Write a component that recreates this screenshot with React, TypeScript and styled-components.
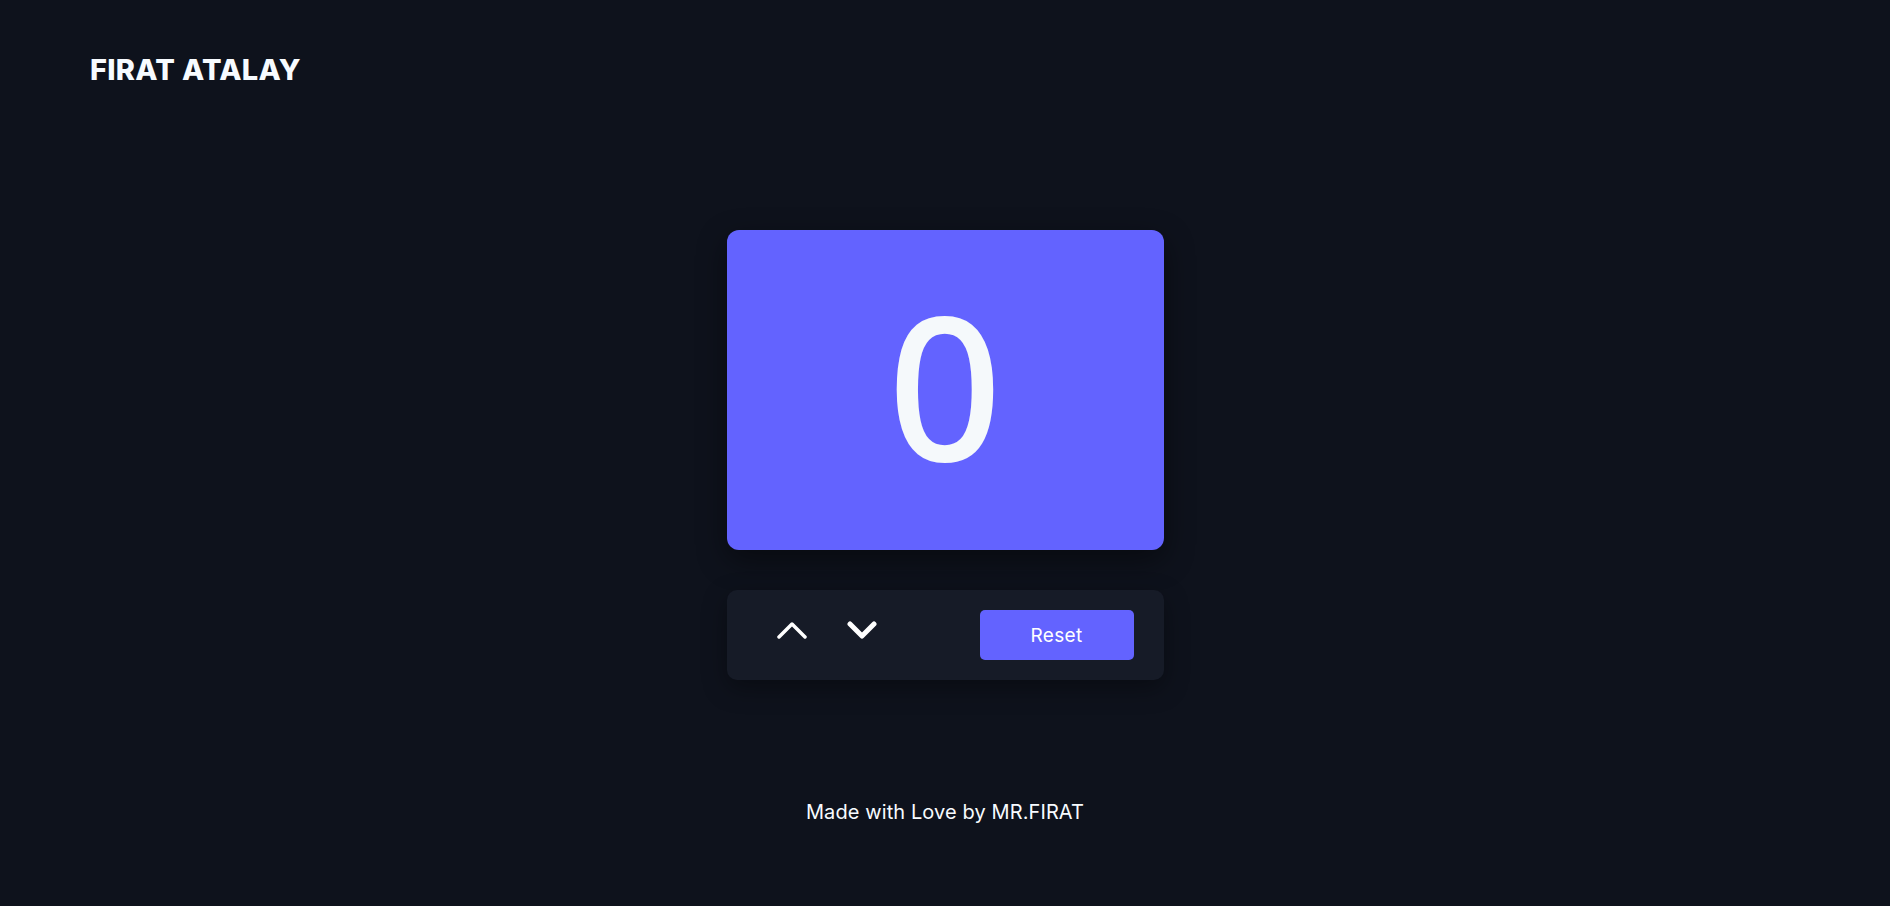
import React, { useState } from "react";
import styled, { createGlobalStyle } from "styled-components";

const Global = createGlobalStyle`
  html, body { margin: 0; padding: 0; background: #0e121c; }
  body { font-family: Inter, "Open Sans", sans-serif; color: #ffffff; }
  * { box-sizing: border-box; }
`;

const Page = styled.div`
  min-height: 906px;
  display: flex;
  flex-direction: column;
  background: #0e121c;
`;

const Header = styled.header`
  padding: 52px 90px 0;
  height: 100px;
`;

const Logo = styled.h1`
  margin: 0;
  font-family: Inter, sans-serif;
  font-weight: 800;
  font-size: 29px;
  line-height: 36px;
  letter-spacing: 0.3px;
  color: #f7fbff;
`;

const Main = styled.main`
  display: flex;
  flex-direction: column;
  align-items: center;
  padding-top: 130px;
`;

const Card = styled.div`
  width: 437px;
  height: 320px;
  border-radius: 12px;
  background: #6363ff;
  box-shadow: 0 10px 30px rgba(0, 0, 0, 0.45);
  display: flex;
  align-items: center;
  justify-content: center;
`;

const Count = styled.span`
  font-family: "Noto Sans", "Open Sans", sans-serif;
  font-weight: 500;
  font-size: 200px;
  line-height: 1;
  color: #f5f9fb;
  transform: translateY(-6px);
`;

const Controls = styled.div`
  margin-top: 40px;
  width: 437px;
  height: 90px;
  border-radius: 10px;
  background: #161b27;
  box-shadow: 0 8px 24px rgba(0, 0, 0, 0.35);
  display: flex;
  align-items: center;
  padding: 0 30px 0 50px;
`;

const IconButton = styled.button`
  background: none;
  border: none;
  padding: 0;
  width: 30px;
  height: 18px;
  margin-right: 40px;
  margin-top: -10px;
  cursor: pointer;
  display: flex;
  svg { display: block; }
`;

const ResetButton = styled.button`
  margin-left: auto;
  width: 154px;
  height: 50px;
  border: none;
  border-radius: 5px;
  background: #6363ff;
  color: #ffffff;
  font-family: Inter, sans-serif;
  font-size: 19px;
  font-weight: 400;
  letter-spacing: 0.3px;
  cursor: pointer;
`;

const Footer = styled.footer`
  margin-top: 120px;
  text-align: center;
  font-family: Inter, sans-serif;
  font-size: 20px;
  letter-spacing: 0.1px;
  color: #f7fbff;
`;

export default function App() {
  const [count, setCount] = useState(0);
  return (
    <Page>
      <Global />
      <Header>
        <Logo>FIRAT ATALAY</Logo>
      </Header>
      <Main>
        <Card>
          <Count>{count}</Count>
        </Card>
        <Controls>
          <IconButton aria-label="increase" onClick={() => setCount(count + 1)}>
            <svg width="30" height="18" viewBox="0 0 30 18">
              <polyline points="2,16 15,3 28,16" fill="none" stroke="#ffffff" strokeWidth="3.5" strokeLinecap="round" strokeLinejoin="round" />
            </svg>
          </IconButton>
          <IconButton aria-label="decrease" onClick={() => setCount(count - 1)}>
            <svg width="30" height="18" viewBox="0 0 30 18">
              <polyline points="3,3 15,15 27,3" fill="none" stroke="#ffffff" strokeWidth="5" strokeLinecap="round" strokeLinejoin="round" />
            </svg>
          </IconButton>
          <ResetButton onClick={() => setCount(0)}>Reset</ResetButton>
        </Controls>
      </Main>
      <Footer>Made with Love by MR.FIRAT</Footer>
    </Page>
  );
}
